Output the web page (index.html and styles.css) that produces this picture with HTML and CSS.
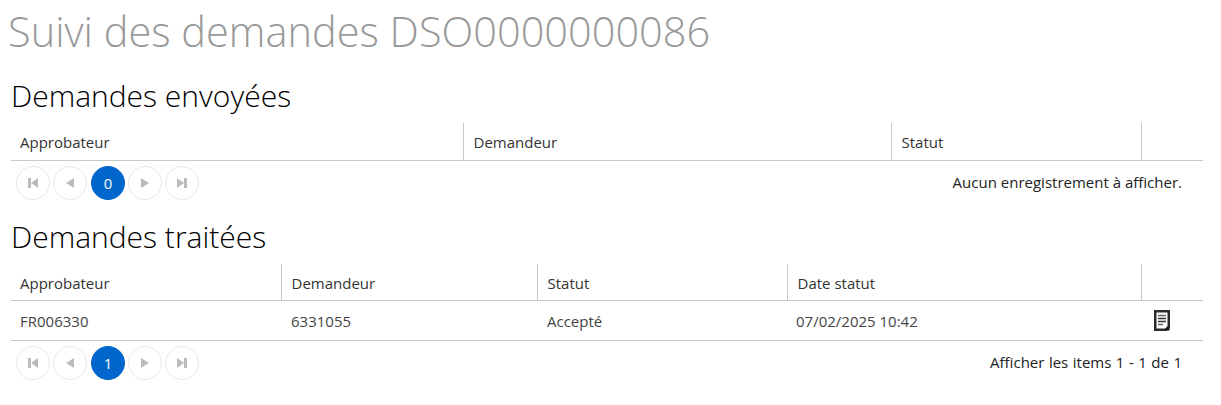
FILE: index.html
```html
<!DOCTYPE html>
<html lang="fr">

<head>
    <meta charset="UTF-8">
    <title>Suivi des demandes</title>
    <link rel="stylesheet" href="styles.css">
</head>

<body>
    <h1 class="page-title">Suivi des demandes DSO0000000086</h1>

    <h2 class="section-title">Demandes envoyées</h2>
    <div class="grid">
        <table class="grid-table sent-table">
            <thead>
                <tr>
                    <th>Approbateur</th>
                    <th>Demandeur</th>
                    <th>Statut</th>
                    <th></th>
                </tr>
            </thead>
        </table>
        <div class="pager">
            <div class="pager-buttons">
                <span class="pager-btn"><svg width="12" height="12" viewBox="0 0 12 12"><path d="M1 1h3v10H1zM11 1v10L4 6z"/></svg></span>
                <span class="pager-btn"><svg width="12" height="12" viewBox="0 0 12 12"><path d="M10 1v10L2 6z"/></svg></span>
                <span class="pager-btn pager-current">0</span>
                <span class="pager-btn"><svg width="12" height="12" viewBox="0 0 12 12"><path d="M2 1v10l8-5z"/></svg></span>
                <span class="pager-btn"><svg width="12" height="12" viewBox="0 0 12 12"><path d="M1 1v10l7-5zM8 1h3v10H8z"/></svg></span>
            </div>
            <span class="pager-info">Aucun enregistrement à afficher.</span>
        </div>
    </div>

    <h2 class="section-title section-second">Demandes traitées</h2>
    <div class="grid">
        <table class="grid-table done-table">
            <thead>
                <tr>
                    <th>Approbateur</th>
                    <th>Demandeur</th>
                    <th>Statut</th>
                    <th>Date statut</th>
                    <th></th>
                </tr>
            </thead>
            <tbody>
                <tr>
                    <td>FR006330</td>
                    <td class="cell-shift">6331055</td>
                    <td class="cell-shift">Accepté</td>
                    <td>07/02/2025 10:42</td>
                    <td class="cell-icon">
                        <svg class="doc-icon" width="16" height="21" viewBox="0 0 16 21">
                            <path d="M1.25 1.25h13.5v15.5l-3 3H1.25z" fill="#fff" stroke="#2b2b2b" stroke-width="2.5"/>
                            <path d="M10.5 20.5l5-5v5z" fill="#111"/>
                            <path d="M4 5.5h8M4 14.5h5" stroke="#666" stroke-width="1.5"/>
                            <path d="M4 8.5h8M4 11.5h8" stroke="#333" stroke-width="1.5"/>
                        </svg>
                    </td>
                </tr>
            </tbody>
        </table>
        <div class="pager">
            <div class="pager-buttons">
                <span class="pager-btn"><svg width="12" height="12" viewBox="0 0 12 12"><path d="M1 1h3v10H1zM11 1v10L4 6z"/></svg></span>
                <span class="pager-btn"><svg width="12" height="12" viewBox="0 0 12 12"><path d="M10 1v10L2 6z"/></svg></span>
                <span class="pager-btn pager-current">1</span>
                <span class="pager-btn"><svg width="12" height="12" viewBox="0 0 12 12"><path d="M2 1v10l8-5z"/></svg></span>
                <span class="pager-btn"><svg width="12" height="12" viewBox="0 0 12 12"><path d="M1 1v10l7-5zM8 1h3v10H8z"/></svg></span>
            </div>
            <span class="pager-info pager-info-items">Afficher les items 1 - 1 de 1</span>
        </div>
    </div>
</body>

</html>
```

FILE: styles.css
```css
body {
    font-family: "Open Sans", "Noto Sans", sans-serif;
    font-size: 15px;
    color: #2e2e2e;
    margin: 0;
    padding: 0 18px 0 11px;
    background-color: #fff;
}

.page-title {
    font-size: 41.5px;
    font-weight: 300;
    line-height: 56px;
    color: #999;
    margin: 3px 0 0 -3px;
}

.section-title {
    font-size: 30px;
    font-weight: 300;
    line-height: 42px;
    color: #000;
    margin: 16px 0 6px;
}

.section-second {
    margin-top: 15px;
    margin-bottom: 6px;
}

.grid-table {
    width: 100%;
    border-collapse: collapse;
    table-layout: fixed;
}

.grid-table th {
    box-sizing: border-box;
    height: 37px;
    padding: 2px 9px 0 10px;
    text-align: left;
    font-weight: 400;
    color: #333;
    border-bottom: 1px solid #c8c8c8;
    border-left: 1px solid #c8c8c8;
}

.grid-table th:first-child {
    padding-left: 9px;
    border-left: 0;
}

.grid-table td {
    box-sizing: border-box;
    height: 40px;
    padding: 1px 9px 0;
    color: #444;
    border-bottom: 1px solid #c8c8c8;
}

.grid-table .cell-shift {
    padding-left: 10px;
}

.sent-table th:nth-child(1) { width: 452px; }
.sent-table th:nth-child(2) { width: 428px; }
.sent-table th:nth-child(3) { width: 250px; }

.done-table th:nth-child(1) { width: 270px; }
.done-table th:nth-child(2) { width: 256px; }
.done-table th:nth-child(3) { width: 250px; }
.done-table th:nth-child(4) { width: 354px; }

.grid-table .cell-icon {
    padding: 0 0 0 13px;
}

.doc-icon {
    display: block;
}

.pager {
    display: flex;
    justify-content: space-between;
    align-items: center;
    height: 40px;
    padding: 0 21px 0 5px;
}

.pager-buttons {
    display: flex;
    gap: 3px;
    margin-top: 4px;
}

.pager-btn {
    display: flex;
    align-items: center;
    justify-content: center;
    box-sizing: border-box;
    width: 34px;
    height: 34px;
    border: 1px solid #e8e8e8;
    border-radius: 50%;
    fill: #bbb;
}

.pager-current {
    margin-left: 1px;
    background-color: #0066cc;
    border-color: #0066cc;
    color: #fff;
}

.pager-info {
    padding-top: 2px;
    color: #222;
}

.pager-info-items {
    word-spacing: 0.6px;
}
```
